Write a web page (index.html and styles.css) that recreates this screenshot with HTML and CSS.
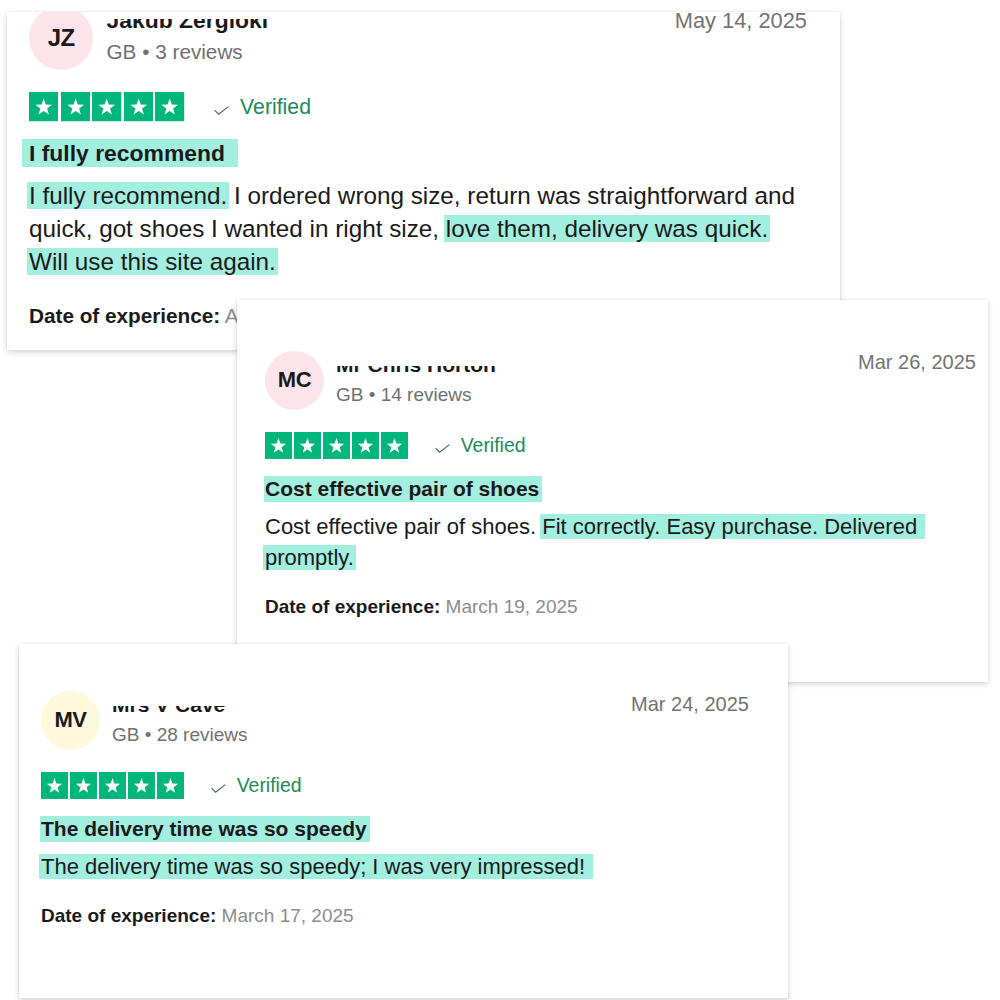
FILE: index.html
```html
<!DOCTYPE html>
<html lang="en">
  <head>
    <meta charset="UTF-8" />
    <meta name="viewport" content="width=device-width, initial-scale=1.0" />
    <title>Customer reviews</title>
    <link rel="stylesheet" href="styles.css">
  </head>
  <body>
    <svg class="defs" aria-hidden="true">
      <symbol id="star" viewBox="0 0 24 24">
        <rect width="24" height="24" fill="#00b67a" />
        <polygon fill="#fff" points="12,5.4 13.7,10.25 18.85,10.38 14.76,13.5 16.23,18.42 12,15.5 7.77,18.42 9.24,13.5 5.15,10.38 10.3,10.25" />
      </symbol>
      <symbol id="check" viewBox="0 0 15 9">
        <polyline points="0.6,4.2 4.6,8.2 14.4,0.6" fill="none" stroke="currentColor" stroke-width="1.2" />
      </symbol>
    </svg>

    <main class="collage">
      <!-- review 1 -->
      <article class="review review-one">
        <header class="review-head">
          <div class="avatar avatar-pink">JZ</div>
          <div class="reviewer">
            <div class="reviewer-name"><span>Jakub Zergioki</span></div>
            <div class="reviewer-meta">GB &bull; 3 reviews</div>
          </div>
          <time class="review-date">May 14, 2025</time>
        </header>
        <div class="review-rating">
          <div class="stars">
            <svg class="star"><use href="#star" /></svg>
            <svg class="star"><use href="#star" /></svg>
            <svg class="star"><use href="#star" /></svg>
            <svg class="star"><use href="#star" /></svg>
            <svg class="star"><use href="#star" /></svg>
          </div>
          <span class="verified"><svg class="check"><use href="#check" /></svg>Verified</span>
        </div>
        <h2 class="review-title"><span class="hl">I fully recommend</span></h2>
        <p class="review-text"><span class="hl">I fully recommend.</span> I ordered wrong size, return was straightforward and<br>quick, got shoes I wanted in right size, <span class="hl">love them, delivery was quick.</span><br><span class="hl">Will use this site again.</span></p>
        <p class="review-exp"><b>Date of experience:</b> April 30, 2025</p>
      </article>

      <!-- review 2 -->
      <article class="review review-two">
        <header class="review-head">
          <div class="avatar avatar-pink">MC</div>
          <div class="reviewer">
            <div class="reviewer-name"><span>Mr Chris Horton</span></div>
            <div class="reviewer-meta">GB &bull; 14 reviews</div>
          </div>
          <time class="review-date">Mar 26, 2025</time>
        </header>
        <div class="review-rating">
          <div class="stars">
            <svg class="star"><use href="#star" /></svg>
            <svg class="star"><use href="#star" /></svg>
            <svg class="star"><use href="#star" /></svg>
            <svg class="star"><use href="#star" /></svg>
            <svg class="star"><use href="#star" /></svg>
          </div>
          <span class="verified"><svg class="check"><use href="#check" /></svg>Verified</span>
        </div>
        <h2 class="review-title"><span class="hl">Cost effective pair of shoes</span></h2>
        <p class="review-text">Cost effective pair of shoes. <span class="hl">Fit correctly. Easy purchase. Delivered&nbsp;</span><br><span class="hl">promptly.</span></p>
        <p class="review-exp"><b>Date of experience:</b> March 19, 2025</p>
      </article>

      <!-- review 3 -->
      <article class="review review-three">
        <header class="review-head">
          <div class="avatar avatar-yellow">MV</div>
          <div class="reviewer">
            <div class="reviewer-name"><span>Mrs V Cave</span></div>
            <div class="reviewer-meta">GB &bull; 28 reviews</div>
          </div>
          <time class="review-date">Mar 24, 2025</time>
        </header>
        <div class="review-rating">
          <div class="stars">
            <svg class="star"><use href="#star" /></svg>
            <svg class="star"><use href="#star" /></svg>
            <svg class="star"><use href="#star" /></svg>
            <svg class="star"><use href="#star" /></svg>
            <svg class="star"><use href="#star" /></svg>
          </div>
          <span class="verified"><svg class="check"><use href="#check" /></svg>Verified</span>
        </div>
        <h2 class="review-title"><span class="hl">The delivery time was so speedy</span></h2>
        <p class="review-text"><span class="hl">The delivery time was so speedy; I was very impressed!&nbsp;</span></p>
        <p class="review-exp"><b>Date of experience:</b> March 17, 2025</p>
      </article>
    </main>
  </body>
</html>
```

FILE: styles.css
```css
body {
  margin: 0;
  background-color: #fff;
  font-family: "Liberation Sans", Arial, Helvetica, sans-serif;
  color: #1a1a1a;
}
.defs {
  display: none;
}
.collage {
  position: relative;
  width: 1000px;
  height: 1000px;
  overflow: hidden;
}

/* cards sit on the canvas like pasted screenshots */
.review {
  position: absolute;
  box-sizing: border-box;
  background-color: #fff;
  box-shadow: 0 2px 6px rgba(0, 0, 0, 0.18), 0 0 1px rgba(0, 0, 0, 0.12);
  overflow: hidden;
  font-size: 22px;
}
.review-one {
  left: 7px;
  top: 12px;
  width: 833px;
  height: 338px;
  padding: 0 33px 0 22px;
  font-size: 24px;
  z-index: 1;
}
.review-two {
  left: 237px;
  top: 300px;
  width: 751px;
  height: 382px;
  padding: 51px 12px 0 28px;
  z-index: 2;
}
.review-three {
  left: 19px;
  top: 644px;
  width: 769px;
  height: 354px;
  padding: 47px 39px 0 22px;
  z-index: 3;
}

.review-head {
  display: flex;
  align-items: flex-start;
}
.review-one .review-head {
  margin-top: -6px;
}
.avatar {
  flex: none;
  width: 2.68em;
  height: 2.68em;
  border-radius: 50%;
  display: flex;
  align-items: center;
  justify-content: center;
  font-weight: bold;
  letter-spacing: -0.02em;
}
.avatar-pink {
  background-color: #fde4ea;
}
.avatar-yellow {
  background-color: #fef8dd;
}
.reviewer {
  display: flex;
  flex-direction: column;
  margin-left: 0.55em;
}

/* only the lower edge of the name shows, like in the source shots */
.reviewer-name {
  height: 11px;
  margin-top: 15px;
  overflow: hidden;
  display: flex;
  align-items: flex-end;
}
.reviewer-name span {
  font-size: 0.955em;
  font-weight: bold;
  line-height: 1.15;
  white-space: nowrap;
}
.review-one .reviewer-name {
  height: 14px;
  margin-top: 13px;
}
.reviewer-meta {
  margin-top: 7px;
  font-size: 0.864em;
  line-height: 1.16;
  color: #707070;
}
.review-date {
  margin-left: auto;
  font-size: 0.91em;
  line-height: 1.1;
  color: #737373;
}
.review-three .review-date {
  margin-top: 2px;
}
.review-one .review-date {
  margin-top: 3px;
}

.review-rating {
  display: flex;
  align-items: center;
  margin-top: 1em;
}
.review-one .review-rating {
  margin-top: 22px;
}
.stars {
  display: flex;
  gap: 0.09em;
}
.star {
  display: block;
  width: 1.227em;
  height: 1.227em;
}
.verified {
  display: flex;
  align-items: center;
  margin-left: 1.38em;
  font-size: 0.885em;
  color: #1d8b5b;
}
.check {
  width: 15px;
  height: 9px;
  margin: 0.32em 11px 0 0;
  color: #3d6e5a;
}

.review-title {
  margin: 0.81em 0 0;
  font-size: 0.955em;
  line-height: 1.24;
}
.review-title .hl {
  display: inline-block;
  padding: 0 3px 0 1px;
  margin-left: -1px;
}
.review-one .review-title {
  margin-top: 17px;
}
.review-one .review-title .hl {
  padding: 0 13px 0 7px;
  margin-left: -7px;
}
.hl {
  background-color: #a3efdf;
}
.review-text {
  margin: 0.43em 0 0;
  line-height: 1.41;
}
.review-one .review-text {
  margin-top: 12px;
  font-size: 1.012em;
  line-height: 1.36;
  white-space: nowrap;
}
.review-text .hl {
  padding: 0 2px;
  margin: 0 -2px;
}
.review-exp {
  margin: 1.18em 0 0;
  font-size: 0.864em;
  line-height: 1.16;
  color: #8c8c8c;
}
.review-one .review-exp {
  margin-top: 26px;
}
.review-exp b {
  color: #1a1a1a;
}
```
